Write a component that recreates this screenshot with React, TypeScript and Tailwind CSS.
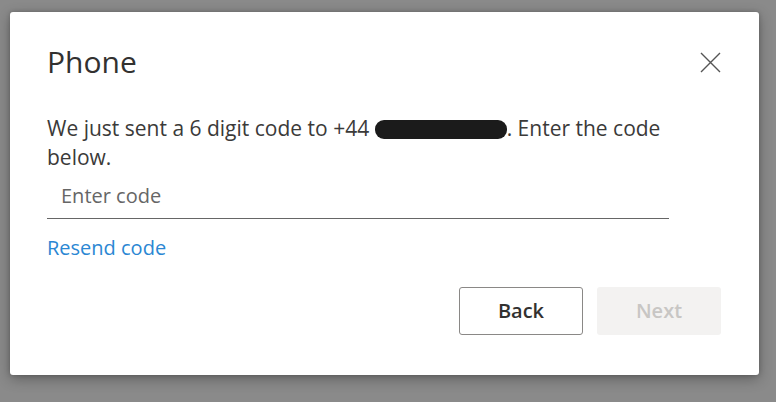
export default function App() {
  return (
    <div className="w-[776px] h-[402px] bg-[#8a8a8a] pt-[12px] pl-[10px] overflow-hidden" style={{ fontFamily: '"Open Sans", "Noto Sans", sans-serif' }}>
      <div className="w-[749px] h-[363px] bg-white rounded-[3px] shadow-[0_4px_14px_rgba(0,0,0,0.3),0_0_4px_rgba(0,0,0,0.2)] pl-[37px] pr-[38px] pt-[30px] flex flex-col">
        <div className="flex items-center justify-between">
          <h1 className="text-[30px] leading-[40px] font-medium text-[#323130]">Phone</h1>
          <button className="w-[24px] h-[24px] flex items-center justify-center mr-[-1px]">
            <svg width="21" height="21" viewBox="0 0 21 21" fill="none" stroke="#555" strokeWidth="1.4">
              <path d="M1 1L20 20M20 1L1 20" />
            </svg>
          </button>
        </div>
        <p className="mt-[32px] w-[640px] text-[21px] leading-[29px] text-[#3b3a39]">
          We just sent a 6 digit code to +44{" "}
          <span className="inline-block align-[-3px] w-[132px] h-[19px] bg-[#1b1b1b] rounded-[9px]"></span>. Enter the code below.
        </p>
        <div className="w-[622px] mt-[10px] border-b border-[#666] pl-[14px] pb-[8px] text-[20px] leading-[28px] text-[#666]">
          Enter code
        </div>
        <div className="mt-[15px] text-[20px] leading-[28px] text-[#2b87d3]">Resend code</div>
        <div className="flex justify-end gap-[14px] mt-[25px]">
          <button className="w-[124px] h-[48px] rounded-[3px] border border-[#8a8886] bg-white text-[20px] font-semibold text-[#323130]">Back</button>
          <button className="w-[124px] h-[48px] rounded-[3px] bg-[#f3f2f1] text-[20px] font-semibold text-[#c8c6c4]">Next</button>
        </div>
      </div>
    </div>
  );
}
